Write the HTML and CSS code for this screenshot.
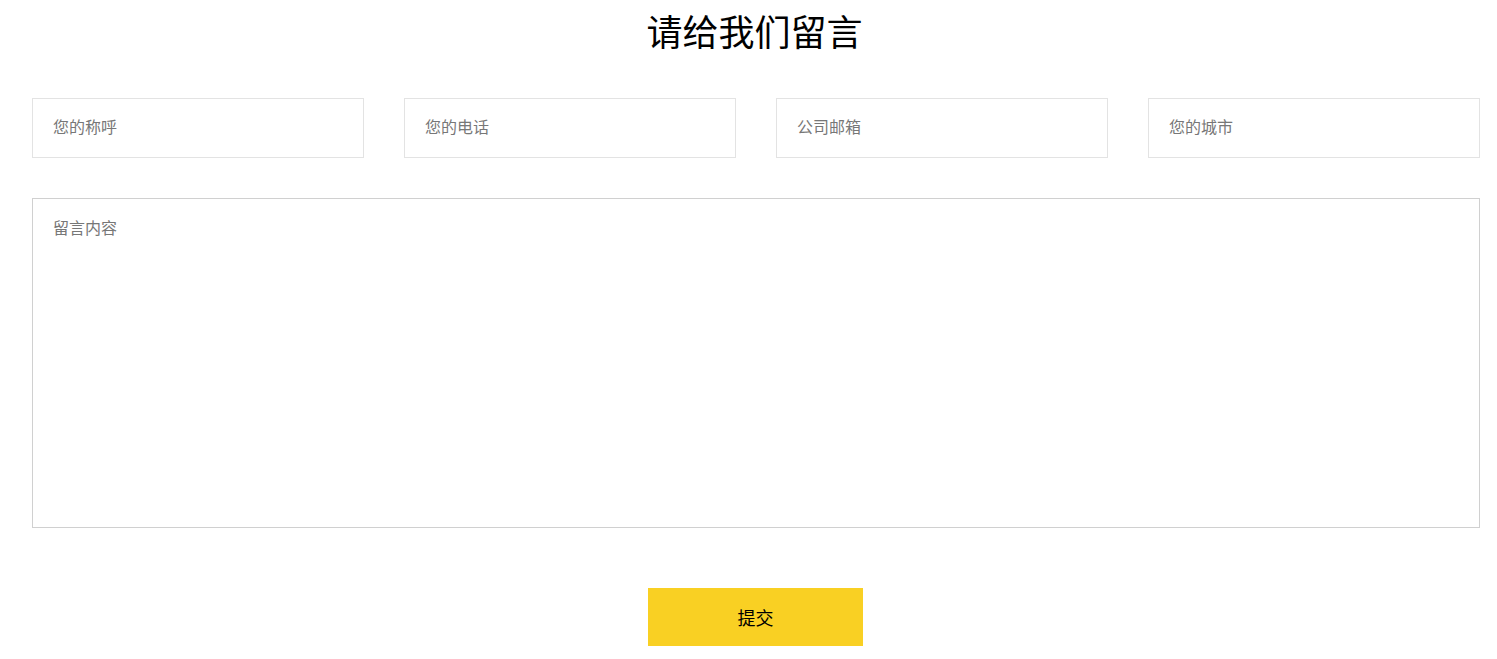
FILE: index.html
```html
<!DOCTYPE html>
<html lang="zh-CN">
<head>
  <meta charset="UTF-8">
  <title>请给我们留言</title>
  <link rel="stylesheet" href="styles.css">
</head>
<body>

  <!-- Message form -->
  <section class="message">
    <h2 class="message-title">请给我们留言</h2>

    <form class="message-form" onsubmit="return false;">
      <div class="field-row">
        <input class="field" type="text" placeholder="您的称呼">
        <input class="field" type="text" placeholder="您的电话">
        <input class="field" type="text" placeholder="公司邮箱">
        <input class="field" type="text" placeholder="您的城市">
      </div>

      <textarea class="content" placeholder="留言内容"></textarea>

      <div class="actions">
        <button class="submit" type="submit">提交</button>
      </div>
    </form>
  </section>

</body>
</html>
```

FILE: styles.css
```css
body {
  margin: 0;
  font-family: "Noto Sans CJK SC", "Liberation Sans", sans-serif;
  background: #fff;
  color: #000;
}

.message {
  width: 1448px;
  margin-left: 32px;
}

.message-title {
  margin: 0;
  padding-top: 8px;
  padding-right: 3px;
  height: 98px;
  box-sizing: border-box;
  font-size: 36px;
  font-weight: normal;
  line-height: 44px;
  text-align: center;
}

.field-row {
  display: flex;
  gap: 40px;
}

.field {
  flex: 1;
  width: 0;
  height: 60px;
  box-sizing: border-box;
  padding: 0 20px 4px;
  border: 1px solid #e3e3e3;
  outline: none;
  font-family: inherit;
  font-size: 16px;
  color: #333;
}

.field::placeholder,
.content::placeholder {
  color: #777;
}

.content {
  display: block;
  width: 100%;
  height: 330px;
  margin-top: 40px;
  box-sizing: border-box;
  padding: 16px 20px;
  border: 1px solid #d0d0d0;
  outline: none;
  resize: none;
  font-family: inherit;
  font-size: 16px;
  color: #333;
}

.actions {
  display: flex;
  justify-content: center;
  padding-right: 1px;
  margin-top: 60px;
}

.submit {
  width: 215px;
  height: 58px;
  border: none;
  background-color: #f9d023;
  font-family: inherit;
  font-size: 18px;
  color: #000;
  cursor: pointer;
}

.submit:hover {
  background-color: #f0c410;
}
```
